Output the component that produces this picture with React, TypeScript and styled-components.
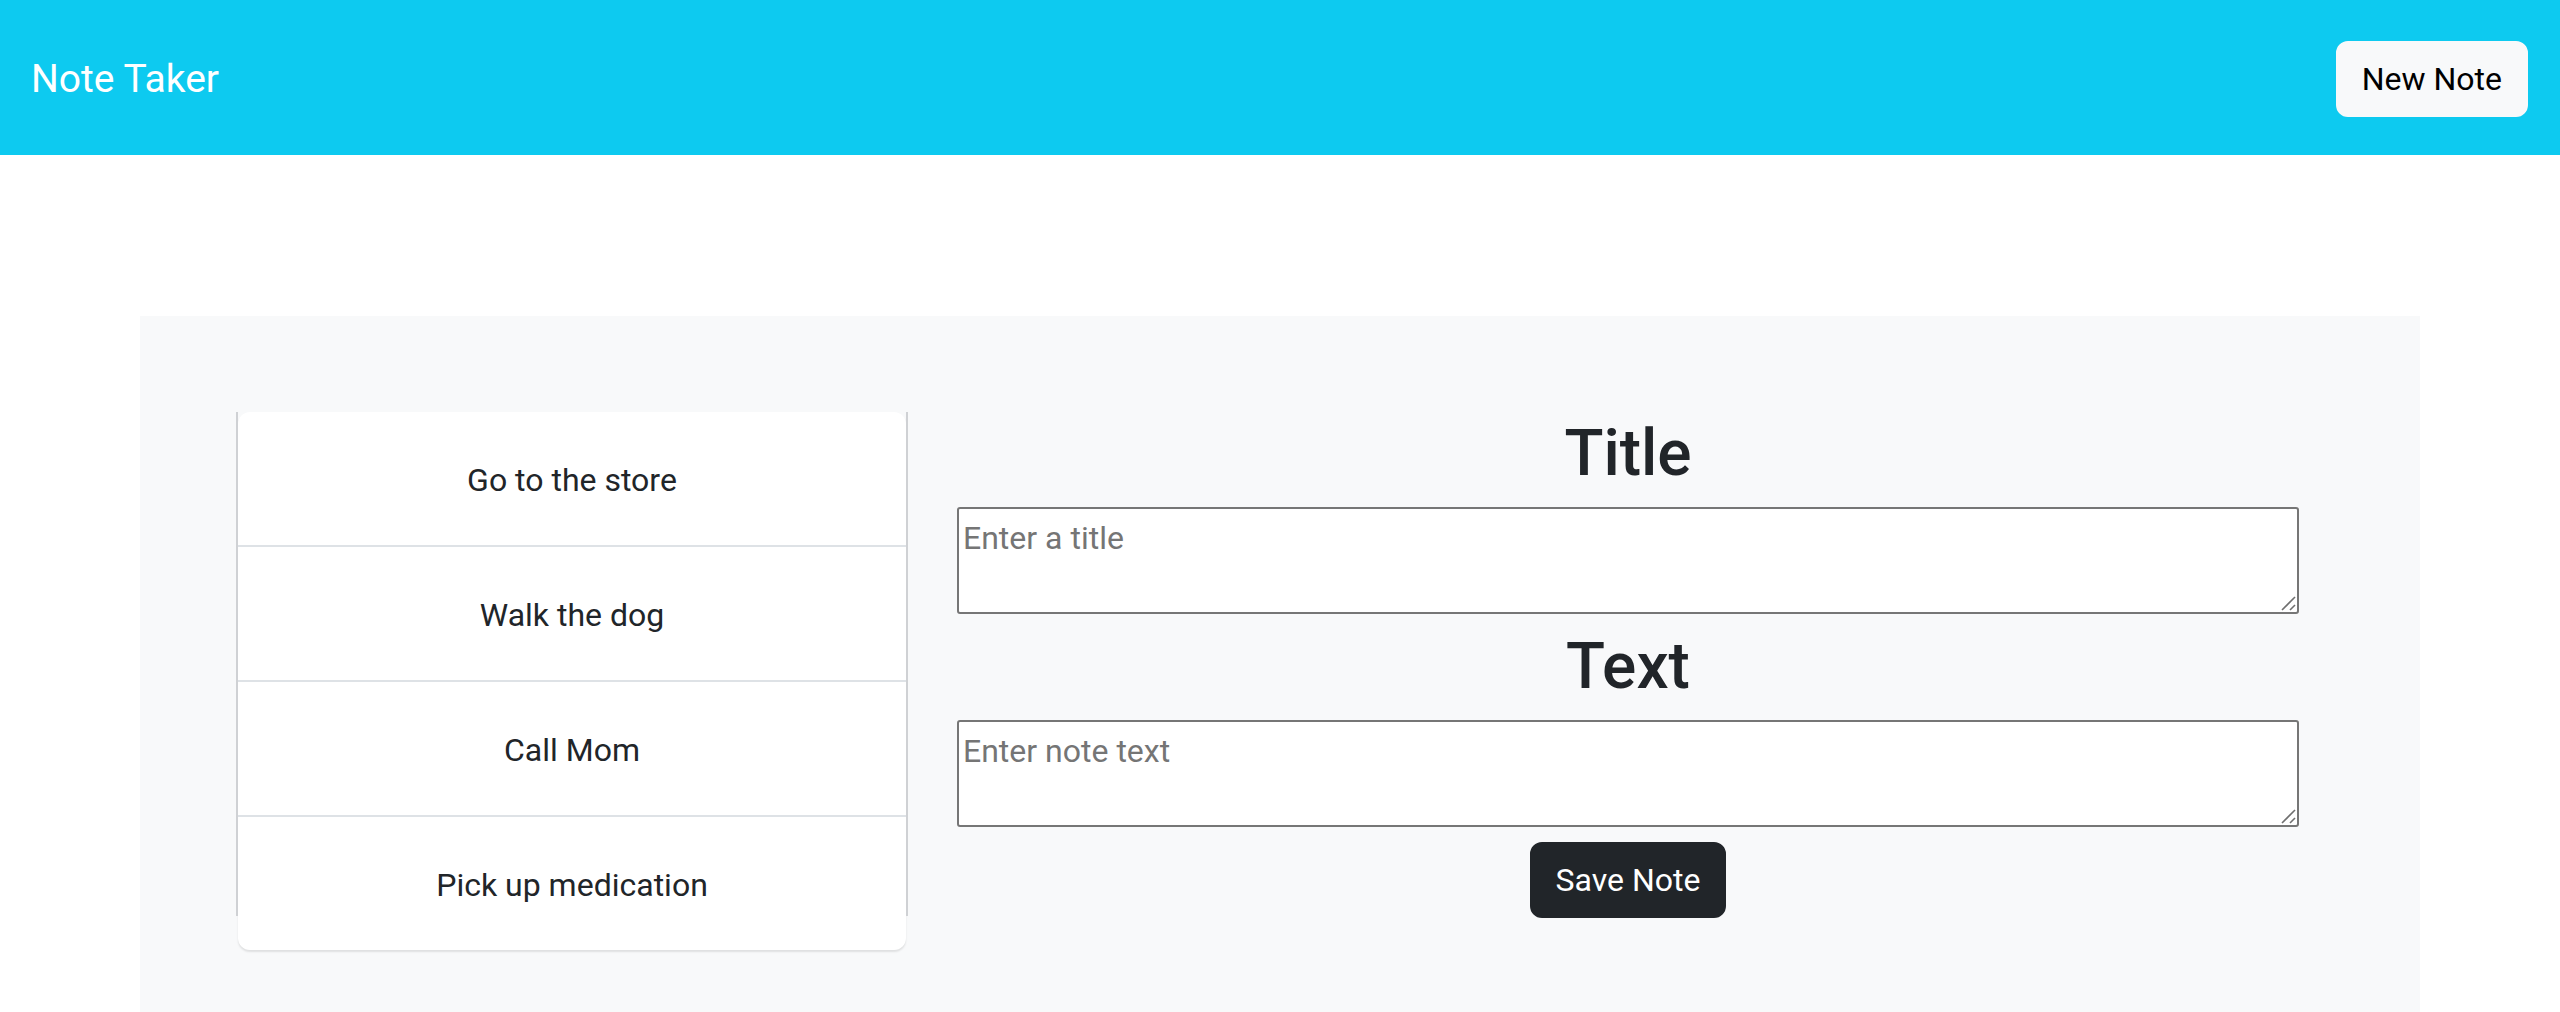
import React from "react";
import styled, { createGlobalStyle } from "styled-components";

const GlobalStyle = createGlobalStyle`
  html, body {
    margin: 0;
    padding: 0;
    overflow: hidden;
    background: #ffffff;
  }
  body {
    font-family: Roboto, "Liberation Sans", Arial, sans-serif;
    color: #212529;
  }
  * { box-sizing: border-box; }
`;

const Header = styled.header`
  height: 155px;
  background: #0dcaf0;
  display: flex;
  align-items: center;
  justify-content: space-between;
  padding: 2px 32px 0 31px;
`;

const Brand = styled.div`
  font-size: 39px;
  line-height: 60px;
  color: #ffffff;
  font-weight: 400;
`;

const Button = styled.button<{ $variant: "light" | "dark" }>`
  font-family: Roboto, "Liberation Sans", Arial, sans-serif;
  font-size: 32px;
  line-height: 48px;
  padding: 12px 24px;
  border: 2px solid ${(p) => (p.$variant === "dark" ? "#212529" : "#f8f9fa")};
  border-radius: 12px;
  background: ${(p) => (p.$variant === "dark" ? "#212529" : "#f8f9fa")};
  color: ${(p) => (p.$variant === "dark" ? "#ffffff" : "#000000")};
  cursor: pointer;
  height: 76px;
  white-space: nowrap;
`;

const Panel = styled.main`
  width: 2280px;
  margin: 161px auto 0;
  height: 696px;
  background: #f8f9fa;
  padding: 96px 94px 0 98px;
  display: flex;
  gap: 24px;
  align-items: flex-start;
`;

const Card = styled.section`
  width: 668px;
  height: 538px;
  flex: none;
  background: #ffffff;
  border-radius: 12px;
  box-shadow: 0 2px 2px rgba(0, 0, 0, 0.1);
`;

const ListFrame = styled.ul`
  list-style: none;
  margin: 0 -2px;
  padding: 0;
  height: 504px;
  border-left: 2px solid #cfd1d4;
  border-right: 2px solid #cfd1d4;
`;

const Item = styled.li<{ $last?: boolean }>`
  height: ${(p) => (p.$last ? "133px" : "135px")};
  border-bottom: ${(p) => (p.$last ? "none" : "2px solid #dee2e6")};
  display: flex;
  align-items: center;
  justify-content: center;
  padding-top: 2px;
  font-size: 32px;
  line-height: 48px;
  color: #212529;
`;

const Editor = styled.div`
  flex: 1;
  display: flex;
  flex-direction: column;
  align-items: center;
  padding-top: 4px;
`;

const Heading = styled.h2`
  margin: 0 0 14px;
  font-size: 64px;
  line-height: 76.8px;
  font-weight: 500;
  color: #212529;
`;

const FieldWrap = styled.div`
  position: relative;
  width: 1342px;
  margin-bottom: 15px;
`;

const Field = styled.textarea`
  display: block;
  width: 100%;
  height: 107px;
  padding: 5px 4px 4px;
  border: 2px solid #767676;
  border-radius: 3px;
  background: #ffffff;
  font-family: Roboto, "Liberation Sans", Arial, sans-serif;
  font-size: 32px;
  line-height: 48px;
  color: #212529;
  resize: none;
  outline: none;
  &::placeholder {
    color: #757575;
  }
`;

const Grip = styled.svg`
  position: absolute;
  right: 2px;
  bottom: 2px;
  width: 18px;
  height: 18px;
  pointer-events: none;
`;

const ResizeGrip = () => (
  <Grip viewBox="0 0 18 18">
    <line x1="3" y1="16" x2="16" y2="3" stroke="#6f6f6f" strokeWidth="1.6" />
    <line x1="11" y1="16" x2="16" y2="11" stroke="#6f6f6f" strokeWidth="1.6" />
  </Grip>
);

const notes = ["Go to the store", "Walk the dog", "Call Mom", "Pick up medication"];

export default function App() {
  return (
    <>
      <GlobalStyle />
      <Header>
        <Brand>Note Taker</Brand>
        <Button $variant="light">New Note</Button>
      </Header>
      <Panel>
        <Card>
          <ListFrame>
            {notes.map((n, i) => (
              <Item key={n} $last={i === notes.length - 1}>
                {n}
              </Item>
            ))}
          </ListFrame>
        </Card>
        <Editor>
          <Heading>Title</Heading>
          <FieldWrap>
            <Field placeholder="Enter a title" />
            <ResizeGrip />
          </FieldWrap>
          <Heading>Text</Heading>
          <FieldWrap>
            <Field placeholder="Enter note text" />
            <ResizeGrip />
          </FieldWrap>
          <Button $variant="dark">Save Note</Button>
        </Editor>
      </Panel>
    </>
  );
}
